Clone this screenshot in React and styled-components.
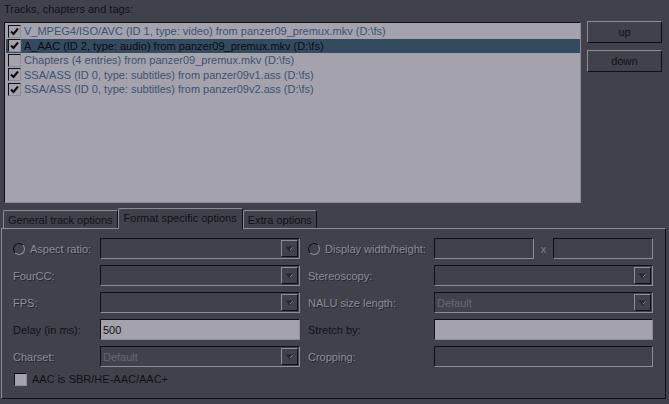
import React from 'react';
import styled, { createGlobalStyle, css } from 'styled-components';

const GlobalStyle = createGlobalStyle`
    html, body {
        margin: 0;
        padding: 0;
        background: #41414c;
    }
    body {
        font-family: "Liberation Sans", Arial, sans-serif;
        font-size: 11px;
        color: #111;
    }
`;

const sunken = css`
    border-top: 1px solid #101014;
    border-left: 1px solid #101014;
    border-right: 1px solid #8d8c98;
    border-bottom: 1px solid #8d8c98;
    box-sizing: border-box;
`;

const raised = css`
    border-top: 1px solid #8d8c98;
    border-left: 1px solid #8d8c98;
    border-right: 1px solid #101014;
    border-bottom: 1px solid #101014;
    box-sizing: border-box;
`;

const Window = styled.div`
    width: 669px;
    height: 404px;
    background: #41414c;
    overflow: hidden;
`;

const TopArea = styled.div`
    display: flex;
    padding: 0 7px 0 4px;
    gap: 6px;
`;

const ListColumn = styled.div`
    display: flex;
    flex-direction: column;
    width: 578px;
`;

const Caption = styled.div`
    height: 22px;
    line-height: 18px;
    color: #111;
`;

const ListBox = styled.div`
    ${sunken};
    height: 181px;
    background: #a4a2ad;
    padding: 1px 0 0 1px;
`;

const ListRow = styled.div`
    display: flex;
    align-items: center;
    height: 14.5px;
    gap: 3px;
    padding-left: 2px;
    color: ${(p) => (p.selected ? '#0c0c10' : '#3a5372')};
    background: ${(p) => (p.selected ? '#344a5f' : 'transparent')};
    white-space: nowrap;
`;

const CheckBox = styled.span`
    ${sunken};
    display: inline-flex;
    align-items: center;
    justify-content: center;
    width: 13px;
    height: 13px;
    flex: none;
    background: #a4a2ad;
`;

const ButtonColumn = styled.div`
    display: flex;
    flex-direction: column;
    gap: 7px;
    padding-top: 21px;
`;

const Button = styled.div`
    ${raised};
    width: 75px;
    height: 22px;
    display: flex;
    align-items: center;
    justify-content: center;
    color: #111;
`;

const TabBar = styled.div`
    display: flex;
    align-items: flex-end;
    height: 21px;
    padding: 0 0 0 3px;
    margin-top: 4px;
    position: relative;
    z-index: 1;
`;

const Tab = styled.div`
    box-sizing: border-box;
    border-top: 1px solid #8d8c98;
    border-left: 1px solid #8d8c98;
    border-right: 1px solid #101014;
    height: ${(p) => (p.active ? '21px' : '18px')};
    padding: ${(p) => (p.active ? '2px 5px 0 5px' : '2px 4px 0 4px')};
    margin-bottom: ${(p) => (p.active ? '-1px' : '0')};
    background: #41414c;
    color: #111;
    line-height: 14px;
    white-space: nowrap;
    border-radius: 2px 2px 0 0;
`;

const Panel = styled.div`
    ${raised};
    margin: 0 3px 0 1px;
    height: 171px;
    padding: 9px 11px 0 11px;
    display: grid;
    grid-template-columns: 87px 200px 134px 219px;
    grid-auto-rows: 21px;
    row-gap: 6px;
    align-items: center;
`;

const Label = styled.div`
    display: flex;
    align-items: center;
    gap: 5px;
    white-space: nowrap;
    padding-left: ${(p) => (p.indent ? '8px' : '0')};
    ${(p) =>
        p.disabled
            ? css`
                  color: #8e8d98;
                  text-shadow: 1px 1px 0 #26262e;
              `
            : css`
                  color: #111;
              `}
`;

const Radio = styled.span`
    width: 12px;
    height: 12px;
    border-radius: 50%;
    box-sizing: border-box;
    border: 1px solid #111;
    border-right-color: #8d8c98;
    border-bottom-color: #8d8c98;
    flex: none;
`;

const Field = styled.div`
    ${sunken};
    height: 21px;
    display: flex;
    align-items: center;
    padding-left: 2px;
    background: ${(p) => (p.enabled ? '#a4a2ad' : '#41414c')};
    color: ${(p) => (p.enabled ? '#111' : '#686773')};
    width: ${(p) => p.width || 'auto'};
`;

const Combo = styled(Field)`
    justify-content: space-between;
    padding-right: 1px;
`;

const DropButton = styled.span`
    ${raised};
    width: 17px;
    height: 17px;
    display: flex;
    align-items: center;
    justify-content: center;
`;

const SizeGroup = styled.div`
    display: flex;
    align-items: center;
`;

const Times = styled.span`
    width: 19px;
    text-align: center;
    color: #7d7c87;
`;

const CheckRow = styled.div`
    grid-column: 1 / span 4;
    display: flex;
    align-items: center;
    gap: 5px;
    padding-left: 1px;
    margin-top: -9px;
    color: #111;
`;

const Tick = () => (
    <svg width="9" height="9" viewBox="0 0 9 9">
        <path d="M1 4.5 L3.5 7 L8 1.5" fill="none" stroke="#0a0a0a" strokeWidth="2" />
    </svg>
);

const Arrow = () => (
    <svg width="9" height="6" viewBox="0 0 9 6">
        <path d="M0.5 0.5 H8.5 L4.5 5.5 Z" fill="#26262e" />
        <path d="M5 4 L7.5 1.2" stroke="#8d8c98" strokeWidth="1" />
    </svg>
);

const tracks = [
    { text: 'V_MPEG4/ISO/AVC (ID 1, type: video) from panzer09_premux.mkv (D:\\fs)', checked: true },
    { text: 'A_AAC (ID 2, type: audio) from panzer09_premux.mkv (D:\\fs)', checked: true, selected: true },
    { text: 'Chapters (4 entries) from panzer09_premux.mkv (D:\\fs)', checked: false },
    { text: 'SSA/ASS (ID 0, type: subtitles) from panzer09v1.ass (D:\\fs)', checked: true },
    { text: 'SSA/ASS (ID 0, type: subtitles) from panzer09v2.ass (D:\\fs)', checked: true },
];

function ComboBox({ value }) {
    return (
        <Combo>
            <span>{value}</span>
            <DropButton>
                <Arrow />
            </DropButton>
        </Combo>
    );
}

export default function App() {
    return (
        <Window>
            <GlobalStyle />
            <TopArea>
                <ListColumn>
                    <Caption>Tracks, chapters and tags:</Caption>
                    <ListBox>
                        {tracks.map((t) => (
                            <ListRow key={t.text} selected={t.selected}>
                                <CheckBox>{t.checked && <Tick />}</CheckBox>
                                {t.text}
                            </ListRow>
                        ))}
                    </ListBox>
                </ListColumn>
                <ButtonColumn>
                    <Button>up</Button>
                    <Button>down</Button>
                </ButtonColumn>
            </TopArea>

            <TabBar>
                <Tab>General track options</Tab>
                <Tab active>Format specific options</Tab>
                <Tab>Extra options</Tab>
            </TabBar>

            <Panel>
                <Label disabled>
                    <Radio /> Aspect ratio:
                </Label>
                <ComboBox value="" />
                <Label disabled indent>
                    <Radio /> Display width/height:
                </Label>
                <SizeGroup>
                    <Field width="100px" />
                    <Times>x</Times>
                    <Field width="100px" />
                </SizeGroup>

                <Label disabled>FourCC:</Label>
                <ComboBox value="" />
                <Label disabled indent>Stereoscopy:</Label>
                <ComboBox value="" />

                <Label disabled>FPS:</Label>
                <ComboBox value="" />
                <Label disabled indent>NALU size length:</Label>
                <ComboBox value="Default" />

                <Label>Delay (in ms):</Label>
                <Field enabled>500</Field>
                <Label indent>Stretch by:</Label>
                <Field enabled />

                <Label disabled>Charset:</Label>
                <ComboBox value="Default" />
                <Label disabled indent>Cropping:</Label>
                <Field />

                <CheckRow>
                    <CheckBox />
                    AAC is SBR/HE-AAC/AAC+
                </CheckRow>
            </Panel>
        </Window>
    );
}
